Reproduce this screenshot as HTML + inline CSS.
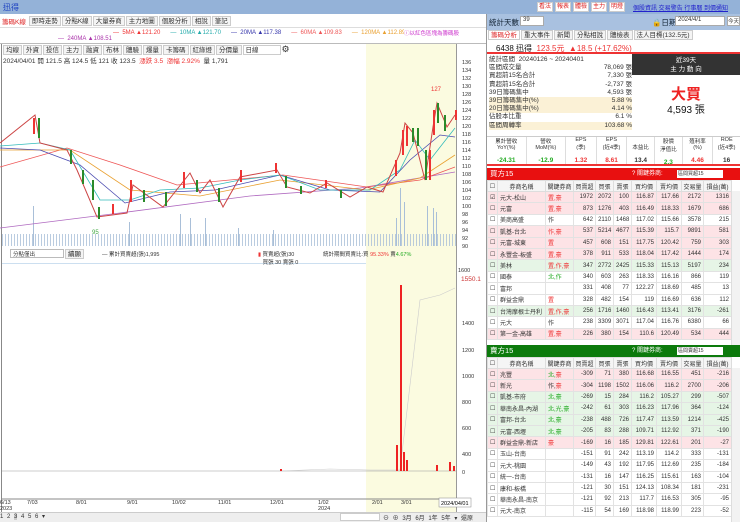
<!DOCTYPE html><html><head><meta charset="utf-8"><style>
*{margin:0;padding:0;box-sizing:border-box}
body{width:740px;height:522px;overflow:hidden;background:#fff;font-family:"Liberation Sans","Noto Sans CJK TC",sans-serif;font-size:7px;color:#333;position:relative}
.a{position:absolute}
.tb{border:1px solid #ccc;background:#f4f4f4;padding:0 2px;height:10px;line-height:9px;display:inline-block;font-size:6.5px}
table{border-collapse:collapse;table-layout:fixed;width:244px;font-size:6px}
td{border:1px solid #e2e2e2;height:11.4px;padding:0 2px;text-align:right;white-space:nowrap;overflow:hidden}
td.l{text-align:left}
.r{color:#e33}.g{color:#2a2}
tr.p td{background:#fde3e6}tr.q td{background:#e6f5e6}
th{font-weight:normal;border:1px solid #ddd;height:11px;background:#f5f5f5;font-size:6px}
.tbr{border:1px solid #ccc;background:#fff;color:#d22;width:16px;height:10px;line-height:9px;display:inline-block;font-size:6px;text-align:center}
</style></head><body>
<div class="a" style="left:0;top:0;width:740px;height:14px;background:#94b2d8"></div>
<div class="a" style="left:3px;top:2px;color:#1a3fc0;font-size:8px">迅得</div>
<div class="a" style="left:537px;top:2px;display:flex;gap:2px;white-space:nowrap">
<span class="tbr">看法</span><span class="tbr">報表</span><span class="tbr">體檢</span><span class="tbr">主力</span><span class="tbr">明燈</span></div>
<div class="a" style="left:633px;top:3px;color:#22c;font-size:6px;text-decoration:underline;white-space:nowrap">個股資訊 交易警告 行事曆 到價通知</div>
<div class="a" style="left:0;top:14px;width:486px;height:14px;background:#fff;border-bottom:1px solid #ddd"></div>
<div class="a" style="left:0;top:16px;display:flex;gap:1px;font-size:6.5px">
<span style="color:#d22;padding:0 2px">籌碼K線</span><span class="tb">即時走勢</span><span class="tb">分點K線</span><span class="tb">大量券商</span><span class="tb">主力地圖</span><span class="tb">個股分析</span><span class="tb">相說</span><span class="tb">筆記</span></div>
<div class="a" style="left:113px;top:30px;font-size:6px;white-space:nowrap"><span class="r">— &nbsp;5MA ▲121.20</span> &nbsp;&nbsp;&nbsp;&nbsp; <span style="color:#2aa">— &nbsp;10MA ▲121.70</span> &nbsp;&nbsp;&nbsp;&nbsp; <span style="color:#33a">— &nbsp;20MA ▲117.38</span> &nbsp;&nbsp;&nbsp;&nbsp; <span style="color:#e55">— &nbsp;60MA ▲109.83</span> &nbsp;&nbsp;&nbsp;&nbsp; <span style="color:#e9a030">— &nbsp;120MA ▲112.89</span></div>
<div class="a" style="left:58px;top:36px;font-size:6px;color:#a3a">— &nbsp;240MA ▲108.51</div>
<div class="a" style="left:404px;top:29px;font-size:5.5px;color:#c3c;background:#fff">ⓘ以紅色區塊為籌碼股</div>
<div class="a" style="left:0;top:43px;width:486px;height:1px;background:#bbb"></div>
<div class="a" style="left:3px;top:45px;display:flex;gap:1px"><span class="tb">均線</span><span class="tb">外資</span><span class="tb">投信</span><span class="tb">主力</span><span class="tb">融資</span><span class="tb">布林</span><span class="tb">體驗</span><span class="tb">爆量</span><span class="tb">卡籌碼</span><span class="tb">紅綠燈</span><span class="tb">分價量</span><span class="tb" style="width:38px;background:#fff">日線</span><span style="font-size:9px;line-height:9px">⚙</span></div>
<div class="a" style="left:3px;top:55px;font-size:6.5px">2024/04/01 開 121.5 高 124.5 低 121 收 123.5 <span class="r">&nbsp;漲跌 3.5 &nbsp;漲幅 2.92%</span> &nbsp;量 1,791</div>
<div class="a" style="left:366px;top:44px;width:90px;height:469px;background:#fbfbe0"></div>
<div class="a" style="left:1px;top:44px;width:1px;height:469px;background:#888"></div>
<div class="a" style="left:456px;top:44px;width:1px;height:469px;background:#999"></div>
<div class="a" style="left:2px;top:234px;width:454px;height:12px;background:repeating-linear-gradient(90deg,#a9bfd8 0 1px,transparent 1px 3px);opacity:.8"></div>
<svg class="a" style="left:0;top:0" width="486" height="522">
<g fill="#a9bfd8"><rect x="33" y="206" width="1" height="40"/><rect x="129" y="222" width="1" height="24"/><rect x="180" y="214" width="1" height="32"/><rect x="190" y="218" width="1" height="28"/><rect x="205" y="218" width="1" height="28"/><rect x="238" y="228" width="1" height="18"/><rect x="273" y="230" width="1" height="16"/><rect x="400" y="188" width="1" height="58"/><rect x="404" y="202" width="1" height="44"/><rect x="396" y="218" width="1" height="28"/><rect x="427" y="206" width="1" height="40"/><rect x="433" y="208" width="1" height="38"/><rect x="436" y="212" width="1" height="34"/></g>
<g stroke-width="0.8" fill="none">
<polyline stroke="#b06ac0" points="0,228 120,213 250,196 360,188 455,172"/>
<polyline stroke="#e55" points="0,167 67,148 120,165 177,185 283,175 367,187 420,180 455,167"/>
<polyline stroke="#e9a030" points="0,150 70,150 130,190 200,196 280,180 367,190 420,178 455,155"/>
<polyline stroke="#4a4ab0" points="0,148 40,150 80,165 125,203 170,192 215,190 280,175 330,190 380,192 410,160 440,135 455,137"/>
<polyline stroke="#3bb" points="0,146 40,143 70,150 100,200 130,200 160,190 200,188 240,180 280,175 320,190 370,190 400,170 415,140 430,160 455,128"/>
<polyline stroke="#c44" stroke-width="1" points="0,143 35,115 40,143 67,150 77,170 97,217 127,213 133,185 163,207 190,173 200,193 210,180 223,207 240,177 277,170 287,187 310,193 327,183 350,197 367,187 383,192 400,153 405,123 413,133 425,180 433,127 437,103 447,127 455,115"/>
</g>
<g fill="#2a8a2a"><rect x="98" y="207" width="2" height="12"/><rect x="38" y="118" width="2" height="20"/><rect x="425" y="150" width="2" height="30"/><rect x="437" y="103" width="2" height="20"/><rect x="417" y="128" width="2" height="18"/><rect x="196" y="180" width="2" height="12"/><rect x="70" y="150" width="2" height="14"/><rect x="82" y="170" width="2" height="14"/><rect x="92" y="180" width="2" height="20"/><rect x="143" y="190" width="2" height="12"/><rect x="165" y="192" width="2" height="14"/><rect x="218" y="188" width="2" height="14"/><rect x="285" y="176" width="2" height="12"/><rect x="300" y="186" width="2" height="8"/><rect x="340" y="190" width="2" height="8"/><rect x="444" y="115" width="2" height="16"/><rect x="412" y="128" width="2" height="14"/></g>
<g fill="#e33"><rect x="33" y="118" width="2" height="16"/><rect x="402" y="130" width="2" height="25"/><rect x="433" y="110" width="2" height="25"/><rect x="455" y="110" width="2" height="10"/><rect x="183" y="172" width="2" height="16"/><rect x="130" y="180" width="2" height="22"/><rect x="240" y="170" width="2" height="12"/><rect x="275" y="163" width="2" height="10"/><rect x="325" y="180" width="2" height="8"/><rect x="395" y="160" width="2" height="16"/><rect x="406" y="126" width="2" height="20"/><rect x="429" y="150" width="2" height="30"/><rect x="112" y="204" width="2" height="10"/></g>
<text x="431" y="91" font-size="6" fill="#e33">127</text>
<text x="92" y="234" font-size="6" fill="#4a4">95</text>
<g font-size="5.5" fill="#333"><text x="462" y="64">136</text><text x="462" y="72">134</text><text x="462" y="80">132</text><text x="462" y="88">130</text><text x="462" y="96">128</text><text x="462" y="104">126</text><text x="462" y="112">124</text><text x="462" y="120">122</text><text x="462" y="128">120</text><text x="462" y="136">118</text><text x="462" y="144">116</text><text x="462" y="152">114</text><text x="462" y="160">112</text><text x="462" y="168">110</text><text x="462" y="176">108</text><text x="462" y="184">106</text><text x="462" y="192">104</text><text x="462" y="200">102</text><text x="462" y="208">100</text><text x="462" y="216">98</text><text x="462" y="224">96</text><text x="462" y="232">94</text><text x="462" y="240">92</text><text x="462" y="248">90</text>
<text x="458" y="272">1600</text><text x="462" y="325">1400</text><text x="462" y="352">1200</text><text x="462" y="378">1000</text><text x="462" y="404">800</text><text x="462" y="430">600</text><text x="462" y="456">400</text><text x="462" y="474">0</text></g>
<text x="461" y="281" font-size="6.5" fill="#c33">1550.1</text>
<line x1="2" y1="471" x2="456" y2="471" stroke="#999" stroke-width="0.6"/>
<polyline fill="none" stroke="#ccc" stroke-width="0.6" points="280,471 330,469 370,470 400,470 420,300 440,295 455,288"/>
<g fill="#e22"><rect x="400" y="285" width="2" height="186"/><rect x="396" y="445" width="2" height="26"/><rect x="403" y="452" width="2" height="19"/><rect x="406" y="460" width="2" height="11"/><rect x="436" y="465" width="2" height="6"/><rect x="449" y="462" width="2" height="9"/><rect x="453" y="466" width="2" height="5"/><rect x="280" y="469" width="2" height="2"/></g>
<line x1="2" y1="499" x2="456" y2="499" stroke="#888"/>
<g font-size="5.5" fill="#333"><text x="0" y="504">6/13</text><text x="0" y="510">2023</text><text x="27" y="504">7/03</text><text x="76" y="504">8/01</text><text x="127" y="504">9/01</text><text x="172" y="504">10/02</text><text x="218" y="504">11/01</text><text x="270" y="504">12/01</text><text x="318" y="504">1/02</text><text x="318" y="510">2024</text><text x="372" y="504">2/01</text><text x="401" y="504">3/01</text></g>
<rect x="439" y="498" width="32" height="9" fill="#fff" stroke="#888" stroke-width="0.5"/><text x="441" y="505" font-size="5.5">2024/04/01</text>
</svg>
<div class="a" style="left:2px;top:246px;width:454px;height:18px;background:#fff;border-bottom:1px solid #ccdff0"></div>
<div class="a" style="left:366px;top:246px;width:90px;height:18px;background:#fbfbe0"></div>
<div class="a" style="left:10px;top:249px;width:54px;height:9px;border:1px solid #bbb;font-size:5.5px;padding-left:2px">分點僅出</div>
<div class="a" style="left:65px;top:249px" ><span class="tb">續顯</span></div>
<div class="a" style="left:102px;top:250px;font-size:5.5px">— 累計買賣超(張)1,995</div>
<div class="a" style="left:258px;top:250px;font-size:5.5px"><span class="r">▮</span> 買賣超(張)30<br>&nbsp;&nbsp;&nbsp;買張 30 賣張 0</div>
<div class="a" style="left:323px;top:250px;font-size:5.5px">統計期間買賣比:買 <span class="r">95.33%</span> 賣<span class="g">4.67%</span></div>
<div class="a" style="left:0;top:512px;width:486px;height:10px;background:#eee;border-top:1px solid #ccc"></div>
<div class="a" style="left:0;top:513px;font-size:6px;word-spacing:2px">1 2 <span style="background:#ccc">3</span> 4 5 6 ▾</div>
<div class="a" style="left:340px;top:513px;width:40px;height:8px;background:#fff;border:1px solid #ccc"></div>
<div class="a" style="left:383px;top:513px;font-size:6px;word-spacing:2px">⊖ ⊕ 3月 6月 1年 5年 ▾ 還原</div>
<div class="a" style="left:486px;top:14px;width:1px;height:508px;background:#999"></div>
<div class="a" style="left:487px;top:14px;width:253px;height:16px;background:#a9c1e0"></div>
<div class="a" style="left:489px;top:17px;font-size:7.5px;color:#123">統計天數</div>
<div class="a" style="left:520px;top:16px;width:24px;height:10px;background:#fff;border:1px solid #aaa;font-size:6px;padding-left:2px">39</div>
<div class="a" style="left:652px;top:17px;font-size:7.5px;color:#123">🔒日期</div>
<div class="a" style="left:675px;top:16px;width:50px;height:10px;background:#fff;border:1px solid #aaa;font-size:6px;padding-left:2px">2024/4/1</div>
<div class="a" style="left:727px;top:16px;width:13px;height:10px;background:#fff;border:1px solid #aaa;font-size:5.5px">今天</div>
<div class="a" style="left:488px;top:30px;display:flex;gap:1px"><span class="tb" style="color:#d22;background:#fff">籌碼分析</span><span class="tb">重大事件</span><span class="tb">新聞</span><span class="tb">分點相說</span><span class="tb">體檢表</span><span class="tb">法人目標(132.5元)</span></div>
<div class="a" style="left:487px;top:41px;width:253px;height:13px;border-bottom:2px solid #e33"></div>
<div class="a" style="left:496px;top:43px;font-size:8px;color:#111">6438 迅得 &nbsp;<span class="r">123.5元 &nbsp;▲18.5 (+17.62%)</span></div>
<div class="a" style="left:489px;top:56px;width:143px;font-size:6.5px;line-height:8.2px">
<div>統計區間 &nbsp;20240126 ~ 20240401</div>
<div>區間成交量<span style="float:right">78,069 張</span></div>
<div>買超前15名合計<span style="float:right">7,330 張</span></div>
<div>賣超前15名合計<span style="float:right">-2,737 張</span></div>
<div>39日籌碼集中<span style="float:right">4,593 張</span></div>
<div style="background:#fbf1d6">39日籌碼集中(%)<span style="float:right">5.88 %</span></div>
<div style="background:#fbf1d6">20日籌碼集中(%)<span style="float:right">4.14 %</span></div>
<div>佔股本比重<span style="float:right">6.1 %</span></div>
<div style="background:#fbf1d6">區間周轉率<span style="float:right">103.68 %</span></div></div>
<div class="a" style="left:632px;top:54px;width:108px;height:21px;background:#333;color:#fff;text-align:center;font-size:6.5px;line-height:9px;padding-top:2px">近39天<br>主 力 動 向</div>
<div class="a" style="left:632px;top:83px;width:108px;text-align:center;color:#e22;font-size:15px;font-weight:bold">大買</div>
<div class="a" style="left:632px;top:101px;width:108px;text-align:center;color:#111;font-size:10px">4,593 張</div>
<div class="a" style="left:487px;top:136px;width:253px;height:30px;border-top:1px solid #ccc;border-bottom:2px solid #e33;display:flex;font-size:5.5px;text-align:center">
<div style="flex:1.3;border-right:1px solid #ddd">累計營收<br>YoY(%)<br><br><b class="g" style="font-size:6.5px">-24.31</b></div>
<div style="flex:1.3;border-right:1px solid #ddd">營收<br>MoM(%)<br><br><b class="g" style="font-size:6.5px">-12.9</b></div>
<div style="flex:1;border-right:1px solid #ddd">EPS<br>(季)<br><br><b class="r" style="font-size:6.5px">1.32</b></div>
<div style="flex:1;border-right:1px solid #ddd">EPS<br>(近4季)<br><br><b class="r" style="font-size:6.5px">8.61</b></div>
<div style="flex:.9;border-right:1px solid #ddd"><br>本益比<br><br><b style="font-size:6.5px">13.4</b></div>
<div style="flex:.9;border-right:1px solid #ddd">股價<br>淨值比<br><br><b class="g" style="font-size:6.5px">2.3</b></div>
<div style="flex:1;border-right:1px solid #ddd">殖利率<br>(%)<br><br><b class="r" style="font-size:6.5px">4.46</b></div>
<div style="flex:.9">ROE<br>(近4季)<br><br><b style="font-size:6.5px">16</b></div></div>
<div class="a" style="left:487px;top:168px;width:253px;height:12px;background:#e81010;color:#fff;font-size:7.5px;padding-left:3px;line-height:12px">買方15<span style="position:absolute;left:145px;font-size:6px">? 關鍵券商:</span></div>
<div class="a" style="left:677px;top:170px;width:46px;height:8px;background:#fff;font-size:5px;padding-left:1px">區間買超15</div>
<div class="a" style="left:487px;top:180px">
<table><colgroup><col width="10"><col width="48"><col width="28"><col width="22"><col width="18"><col width="18"><col width="25"><col width="25"><col width="22"><col width="28"></colgroup>
<tr><th>☐</th><th>券商名稱</th><th>關鍵券商</th><th>買賣超</th><th>買張</th><th>賣張</th><th>買均價</th><th>賣均價</th><th>交易量</th><th>損益(萬)</th></tr>
<tr class="p"><td>☑</td><td class="l">元大-松山</td><td class="l r">置,豪</td><td>1972</td><td>2072</td><td>100</td><td>116.87</td><td>117.66</td><td>2172</td><td>1316</td></tr>
<tr class="p"><td>☐</td><td class="l">元富</td><td class="l r">置,豪</td><td>873</td><td>1276</td><td>403</td><td>116.49</td><td>118.33</td><td>1679</td><td>686</td></tr>
<tr><td>☐</td><td class="l">美商高盛</td><td class="l">作</td><td>642</td><td>2110</td><td>1468</td><td>117.02</td><td>115.66</td><td>3578</td><td>215</td></tr>
<tr class="p"><td>☐</td><td class="l">凱基-台北</td><td class="l r">作,豪</td><td>537</td><td>5214</td><td>4677</td><td>115.39</td><td>115.7</td><td>9891</td><td>581</td></tr>
<tr class="p"><td>☐</td><td class="l">元富-城東</td><td class="l r">置</td><td>457</td><td>608</td><td>151</td><td>117.75</td><td>120.42</td><td>759</td><td>303</td></tr>
<tr class="p"><td>☐</td><td class="l">永豐金-板盛</td><td class="l r">置,豪</td><td>378</td><td>911</td><td>533</td><td>118.04</td><td>117.42</td><td>1444</td><td>174</td></tr>
<tr class="q"><td>☐</td><td class="l">美林</td><td class="l r">置,作,豪</td><td>347</td><td>2772</td><td>2425</td><td>115.33</td><td>115.13</td><td>5197</td><td>234</td></tr>
<tr><td>☐</td><td class="l">國泰</td><td class="l g">北,作</td><td>340</td><td>603</td><td>263</td><td>118.33</td><td>116.16</td><td>866</td><td>119</td></tr>
<tr><td>☐</td><td class="l">富邦</td><td class="l"></td><td>331</td><td>408</td><td>77</td><td>122.27</td><td>118.69</td><td>485</td><td>13</td></tr>
<tr><td>☐</td><td class="l">群益金鼎</td><td class="l r">置</td><td>328</td><td>482</td><td>154</td><td>119</td><td>116.69</td><td>636</td><td>112</td></tr>
<tr class="q"><td>☐</td><td class="l">台灣摩根士丹利</td><td class="l r">置,作,豪</td><td>256</td><td>1716</td><td>1460</td><td>116.43</td><td>113.41</td><td>3176</td><td>-261</td></tr>
<tr><td>☐</td><td class="l">元大</td><td class="l">作</td><td>238</td><td>3309</td><td>3071</td><td>117.04</td><td>116.76</td><td>6380</td><td>66</td></tr>
<tr class="p"><td>☐</td><td class="l">第一金-高雄</td><td class="l r">置,豪</td><td>226</td><td>380</td><td>154</td><td>110.6</td><td>120.49</td><td>534</td><td>444</td></tr>
</table></div>
<div class="a" style="left:487px;top:345px;width:253px;height:12px;background:#0c7a0c;color:#fff;font-size:7.5px;padding-left:3px;line-height:12px">賣方15<span style="position:absolute;left:145px;font-size:6px">? 關鍵券商:</span></div>
<div class="a" style="left:677px;top:347px;width:46px;height:8px;background:#fff;font-size:5px;padding-left:1px">區間賣超15</div>
<div class="a" style="left:487px;top:357px">
<table><colgroup><col width="10"><col width="48"><col width="28"><col width="22"><col width="18"><col width="18"><col width="25"><col width="25"><col width="22"><col width="28"></colgroup>
<tr><th>☐</th><th>券商名稱</th><th>關鍵券商</th><th>買賣超</th><th>買張</th><th>賣張</th><th>買均價</th><th>賣均價</th><th>交易量</th><th>損益(萬)</th></tr>
<tr class="p"><td>☐</td><td class="l">兆豐</td><td class="l g">北,<span class="r">豪</span></td><td>-309</td><td>71</td><td>380</td><td>116.68</td><td>116.55</td><td>451</td><td>-216</td></tr>
<tr class="p"><td>☐</td><td class="l">新光</td><td class="l">作,<span class="r">豪</span></td><td>-304</td><td>1198</td><td>1502</td><td>116.06</td><td>116.2</td><td>2700</td><td>-206</td></tr>
<tr class="q"><td>☐</td><td class="l">凱基-市府</td><td class="l g">北,豪</td><td>-269</td><td>15</td><td>284</td><td>116.2</td><td>105.27</td><td>299</td><td>-507</td></tr>
<tr class="q"><td>☐</td><td class="l">華南永昌-內湖</td><td class="l g">北,光,豪</td><td>-242</td><td>61</td><td>303</td><td>116.23</td><td>117.96</td><td>364</td><td>-124</td></tr>
<tr class="q"><td>☐</td><td class="l">富邦-台北</td><td class="l g">北,豪</td><td>-238</td><td>488</td><td>726</td><td>117.47</td><td>113.59</td><td>1214</td><td>-425</td></tr>
<tr class="q"><td>☐</td><td class="l">元富-西壢</td><td class="l g">北,豪</td><td>-205</td><td>83</td><td>288</td><td>109.71</td><td>112.92</td><td>371</td><td>-190</td></tr>
<tr class="p"><td>☐</td><td class="l">群益金鼎-新店</td><td class="l r">豪</td><td>-169</td><td>16</td><td>185</td><td>129.81</td><td>122.61</td><td>201</td><td>-27</td></tr>
<tr><td>☐</td><td class="l">玉山-台南</td><td></td><td>-151</td><td>91</td><td>242</td><td>113.19</td><td>114.2</td><td>333</td><td>-131</td></tr>
<tr><td>☐</td><td class="l">元大-桃園</td><td></td><td>-149</td><td>43</td><td>192</td><td>117.95</td><td>112.69</td><td>235</td><td>-184</td></tr>
<tr><td>☐</td><td class="l">統一-台南</td><td></td><td>-131</td><td>16</td><td>147</td><td>116.25</td><td>115.61</td><td>163</td><td>-104</td></tr>
<tr><td>☐</td><td class="l">康和-板橋</td><td></td><td>-121</td><td>30</td><td>151</td><td>124.13</td><td>108.34</td><td>181</td><td>-231</td></tr>
<tr><td>☐</td><td class="l">華南永昌-南京</td><td></td><td>-121</td><td>92</td><td>213</td><td>117.7</td><td>116.53</td><td>305</td><td>-95</td></tr>
<tr><td>☐</td><td class="l">元大-南京</td><td></td><td>-115</td><td>54</td><td>169</td><td>118.98</td><td>118.99</td><td>223</td><td>-52</td></tr>
</table></div>
<div class="a" style="left:731px;top:191px;width:9px;height:154px;background:#f2f2f2;border-left:1px solid #ddd"></div>
<div class="a" style="left:731px;top:368px;width:9px;height:154px;background:#f2f2f2;border-left:1px solid #ddd"></div>
</body></html>
